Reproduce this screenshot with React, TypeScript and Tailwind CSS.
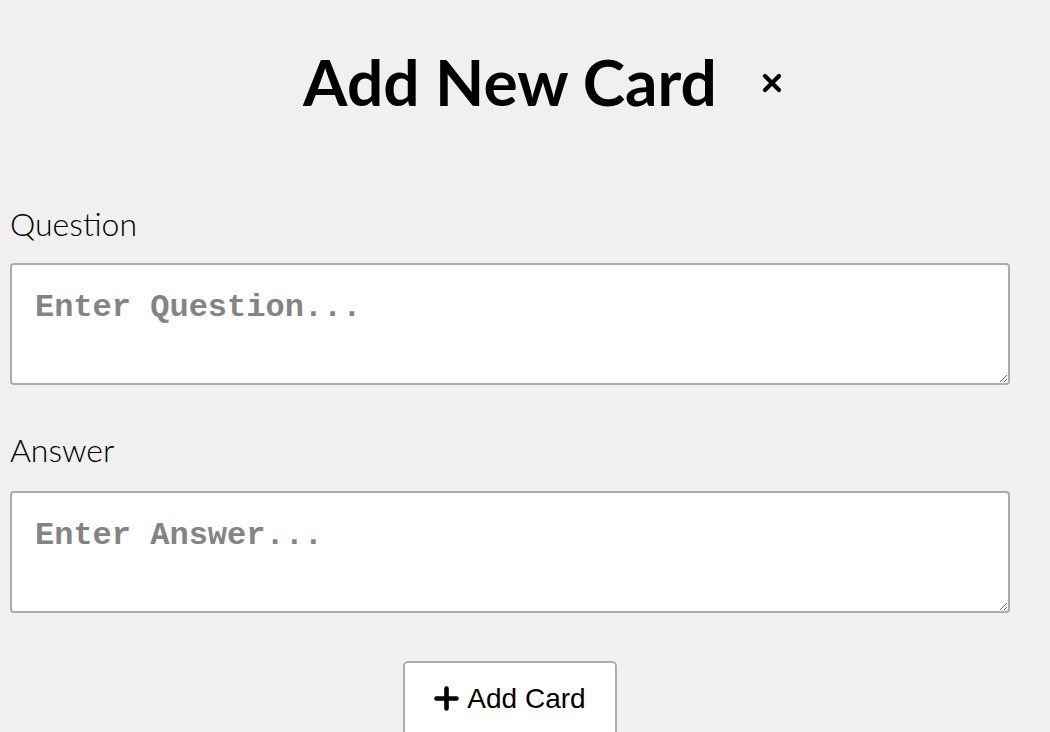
export default function App() {
  return (
    <div className="min-h-screen bg-[#f0f0f0] px-[10px] font-['Lato',sans-serif] text-black">
      <div className="w-[1000px]">
        <div className="relative flex justify-center pt-[44px]">
          <div className="relative">
            <h1 className="text-[64px] font-bold leading-[1.2]">Add New Card</h1>
            <button className="absolute left-[459px] top-[29px] flex h-[20px] w-[20px] items-center justify-center">
              <svg width="20" height="20" viewBox="0 0 20 20" fill="none" stroke="black" strokeWidth="4.2" strokeLinecap="round">
                <path d="M3 3 L17 17 M17 3 L3 17" />
              </svg>
            </button>
          </div>
        </div>

        <form className="mt-[84px] flex flex-col">
          <label className="text-[32px] font-light leading-[1.2]">Question</label>
          <textarea
            placeholder="Enter Question..."
            className="mt-[20px] h-[122px] w-full rounded-[4px] border-2 border-[#acacac] bg-white pl-[23px] pt-[25px] font-['Liberation_Mono',monospace] text-[32px] leading-[36px] font-bold placeholder:text-[#848484] outline-none"
          />
          <label className="mt-[46px] text-[32px] font-light leading-[1.2]">Answer</label>
          <textarea
            placeholder="Enter Answer..."
            className="mt-[21px] h-[122px] w-full rounded-[4px] border-2 border-[#acacac] bg-white pl-[23px] pt-[25px] font-['Liberation_Mono',monospace] text-[32px] leading-[36px] font-bold placeholder:text-[#848484] outline-none"
          />
          <div className="mt-[48px] flex justify-center">
            <button
              type="button"
              className="flex items-center gap-[8px] rounded-[5px] border-2 border-[#acacac] bg-white px-[29px] py-[20px] font-['Liberation_Sans',Arial,sans-serif] text-[28px] leading-[32px]"
            >
              <svg width="25" height="25" viewBox="0 0 25 25" fill="none" stroke="black" strokeWidth="4.6" strokeLinecap="round">
                <path d="M12.5 2.5 V22.5 M2.5 12.5 H22.5" />
              </svg>
              Add Card
            </button>
          </div>
        </form>
      </div>
    </div>
  );
}
